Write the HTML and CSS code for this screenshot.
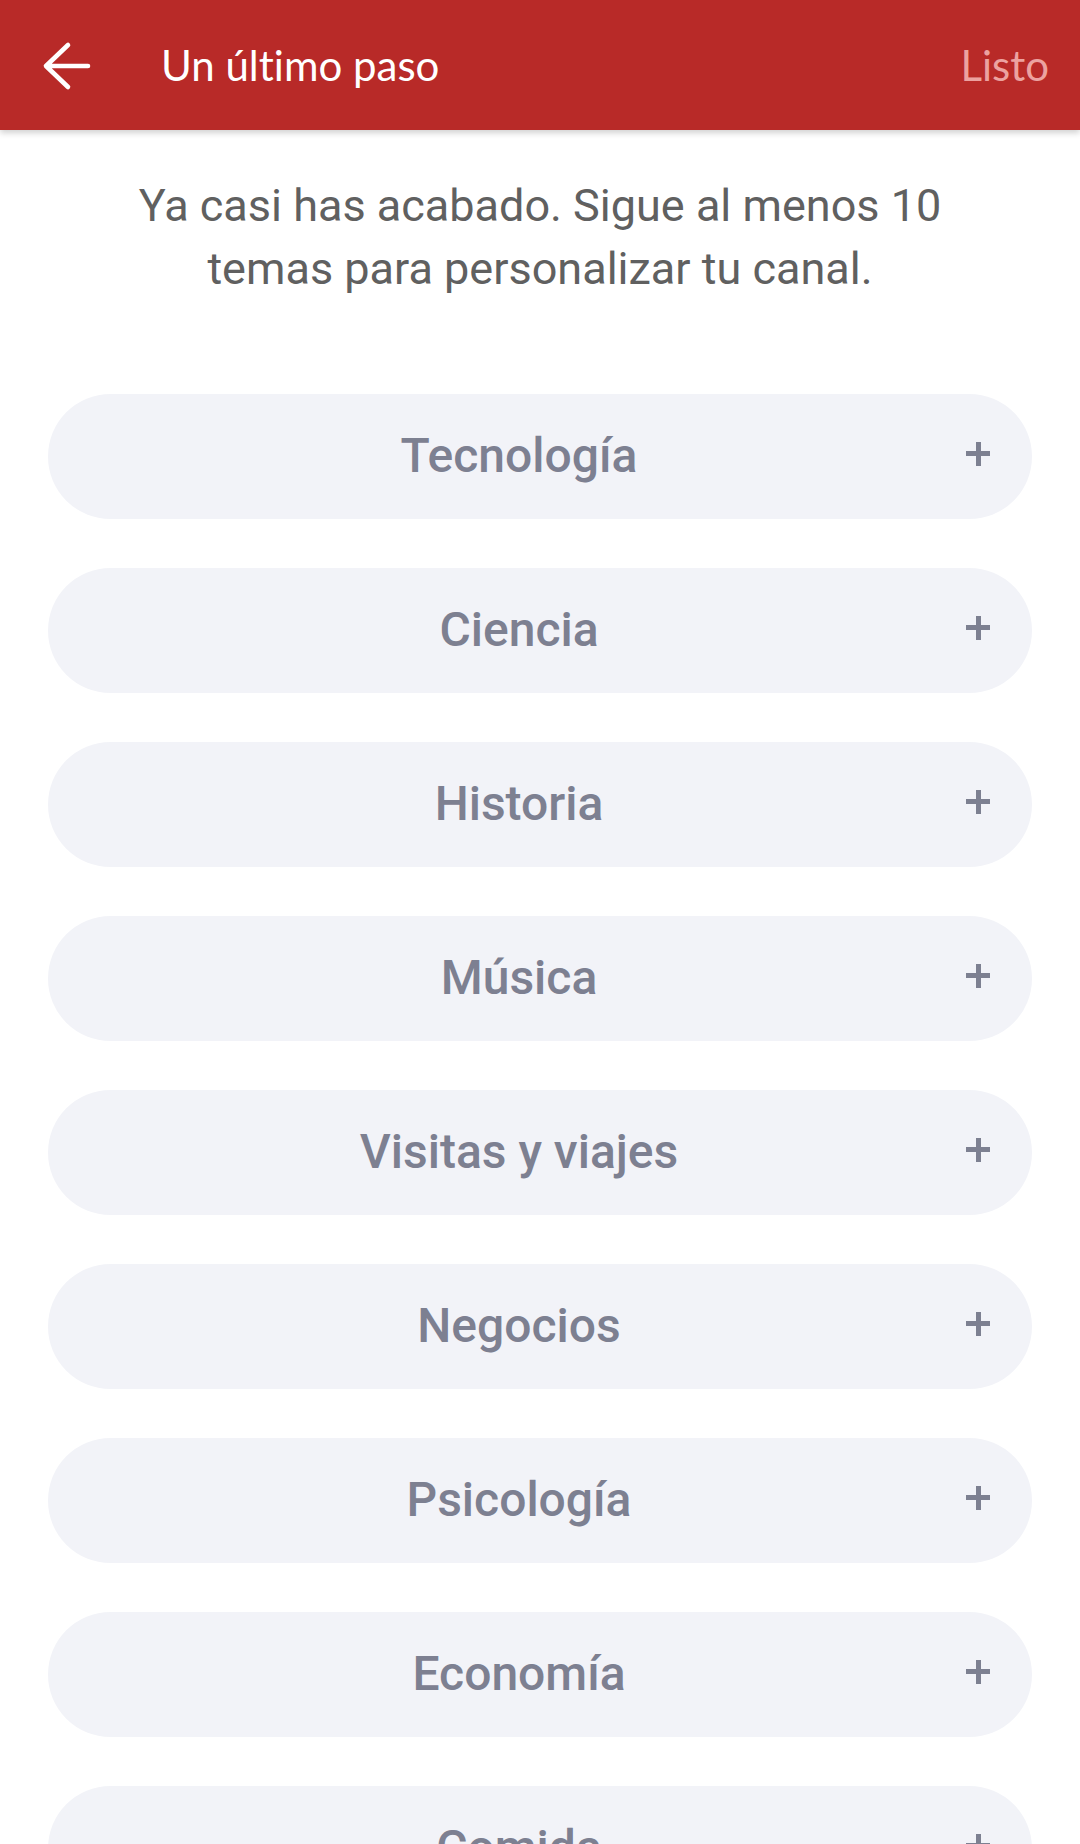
FILE: index.html
```html
<!DOCTYPE html>
<html lang="es">
<head>
<meta charset="utf-8">
<title>Un último paso</title>
<link rel="stylesheet" href="styles.css">
</head>
<body>
<header class="appbar">
  <div class="back">
    <svg width="50" height="50" viewBox="0 0 50 50" aria-hidden="true">
      <path d="M4 25 H46 M26 4 L4 25 L26 46" fill="none" stroke="#fff" stroke-width="4.6" stroke-linecap="round" stroke-linejoin="round"/>
    </svg>
  </div>
  <h1 class="title">Un último paso</h1>
  <span class="done">Listo</span>
</header>
<main class="content">
  <p class="intro">Ya casi has acabado. Sigue al menos 10<br>temas para personalizar tu canal.</p>
  <ul class="topics">
    <li class="topic"><span class="label">Tecnología</span><span class="plus"></span></li>
    <li class="topic"><span class="label">Ciencia</span><span class="plus"></span></li>
    <li class="topic"><span class="label">Historia</span><span class="plus"></span></li>
    <li class="topic"><span class="label">Música</span><span class="plus"></span></li>
    <li class="topic"><span class="label">Visitas y viajes</span><span class="plus"></span></li>
    <li class="topic"><span class="label">Negocios</span><span class="plus"></span></li>
    <li class="topic"><span class="label">Psicología</span><span class="plus"></span></li>
    <li class="topic"><span class="label">Economía</span><span class="plus"></span></li>
    <li class="topic"><span class="label">Comida</span><span class="plus"></span></li>
  </ul>
</main>
</body>
</html>
```
FILE: styles.css
```css
* { box-sizing: border-box; }
html, body { margin: 0; padding: 0; background: #fff; }
body { font-family: Roboto, "Liberation Sans", sans-serif; overflow: hidden; }

.appbar {
  height: 130px;
  background: #B82A28;
  display: flex;
  align-items: center;
  padding: 0 31px 0 42px;
  box-shadow: 0 3px 6px rgba(0,0,0,0.18);
  position: relative;
  z-index: 1;
}
.back { width: 50px; height: 50px; display: flex; align-items: center; justify-content: center; margin-top: 2px; }
.back svg { display: block; }
.title {
  margin: 0 0 0 69px;
  flex: 1;
  font-family: Lato, "Noto Sans", sans-serif;
  font-weight: 400;
  font-size: 42px;
  color: #fff;
  font-variant-ligatures: none;
}
.done {
  font-family: Lato, "Noto Sans", sans-serif;
  font-size: 42px;
  color: #ECA2A0;
}

.content { padding: 44px 48px 0; }
.intro {
  margin: 0;
  text-align: center;
  font-size: 45px;
  line-height: 63px;
  color: #606060;
}
.topics {
  list-style: none;
  margin: 94px 0 0;
  padding: 0;
  display: flex;
  flex-direction: column;
  gap: 49px;
}
.topic {
  height: 125px;
  border-radius: 63px;
  background: #F2F3F8;
  display: flex;
  align-items: center;
  padding: 0 42px 2px 24px;
}
.label {
  flex: 1;
  text-align: center;
  font-size: 48px;
  font-weight: 500;
  color: #7D8091;
}
.plus {
  width: 24px;
  height: 24px;
  position: relative;
  margin-top: -4px;
}
.plus::before, .plus::after {
  content: "";
  position: absolute;
  background: #7D8091;
}
.plus::before { left: 0; right: 0; top: 9.5px; height: 5px; }
.plus::after { top: 0; bottom: 0; left: 9.5px; width: 5px; }
```
